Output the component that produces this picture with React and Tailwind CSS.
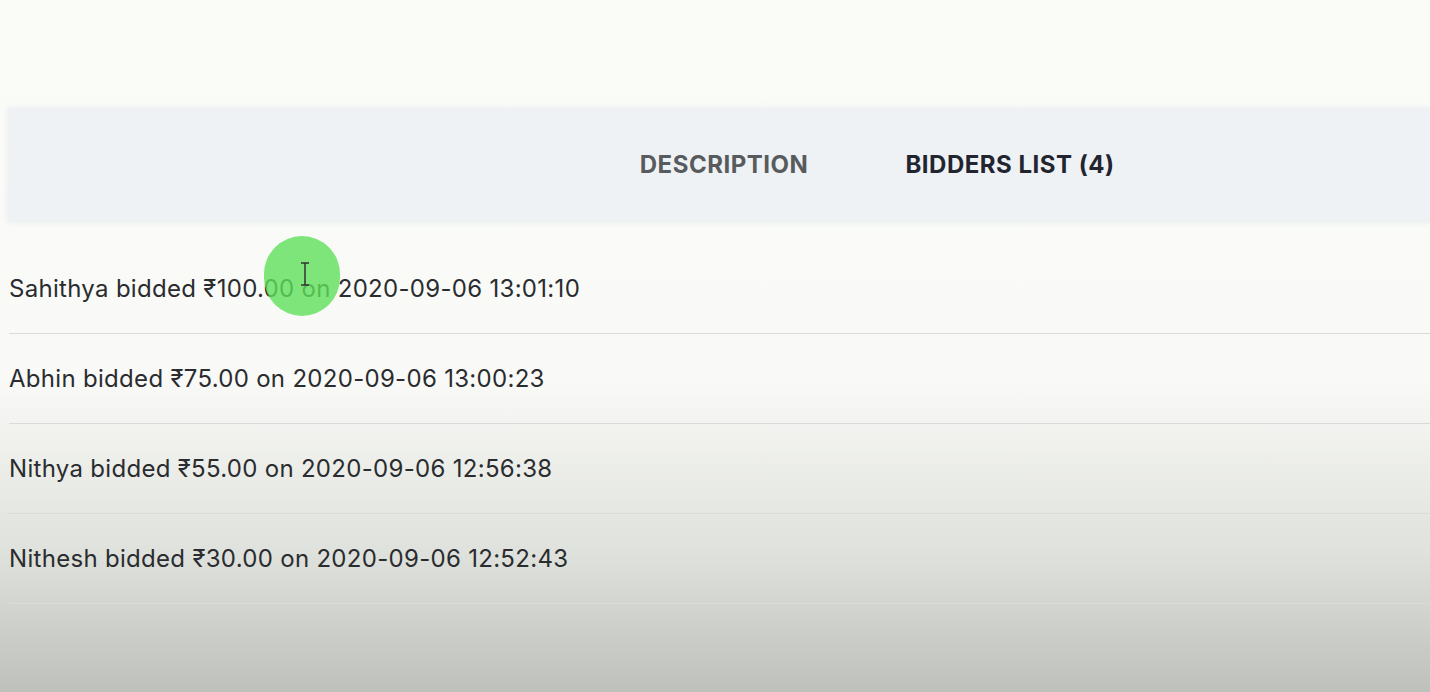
import { useState } from "react";

const bids = [
  { name: "Sahithya", amount: "100.00", at: "2020-09-06 13:01:10" },
  { name: "Abhin", amount: "75.00", at: "2020-09-06 13:00:23" },
  { name: "Nithya", amount: "55.00", at: "2020-09-06 12:56:38" },
  { name: "Nithesh", amount: "30.00", at: "2020-09-06 12:52:43" },
];

export default function App() {
  const [tab, setTab] = useState("bidders");

  return (
    <div
      className="relative h-[692px] w-[1430px] overflow-hidden bg-[linear-gradient(180deg,#fafcf8_0%,#f9faf7_55%,#dfe1dc_80%,#bec0bb_100%)]"
      style={{ fontFamily: "Inter, 'Noto Sans', sans-serif" }}
    >
      <div className="pt-[108px]">
        {/* tabs */}
        <div className="ml-[8px] flex h-[114px] items-center bg-[#eff2f4] pl-[630px] shadow-[0_0_6px_rgba(230,234,236,0.9)]">
          <button
            onClick={() => setTab("description")}
            className={`w-[172px] text-center text-[24px] font-bold tracking-[0.5px] ${tab === "description" ? "text-[#222530]" : "text-[#575b5e]"}`}
          >
            DESCRIPTION
          </button>
          <button
            onClick={() => setTab("bidders")}
            className={`ml-[93px] w-[214px] text-center text-[24px] font-bold tracking-[0.5px] ${tab === "bidders" ? "text-[#222530]" : "text-[#575b5e]"}`}
          >
            BIDDERS LIST (4)
          </button>
        </div>

        {/* bidders */}
        <ul className="mt-[22px] ml-[9px]">
          {bids.map((b) => (
            <li
              key={b.name}
              className="flex h-[90px] items-center border-b border-[#d9dbd8] text-[24px] tracking-[0.3px] text-[#2a2c2f]"
            >
              {b.name} bidded ₹{b.amount} on {b.at}
            </li>
          ))}
        </ul>
      </div>

      {/* cursor highlight */}
      <div className="absolute left-[264px] top-[236px] h-[80px] w-[76px] rounded-full bg-[#5ee05a]/80" />
      <svg className="absolute left-[299px] top-[262px]" width="12" height="24" viewBox="0 0 12 24">
        <path d="M2 1h8M6 1v22M2 23h8" stroke="#333" strokeWidth="1.5" fill="none" />
      </svg>
    </div>
  );
}
